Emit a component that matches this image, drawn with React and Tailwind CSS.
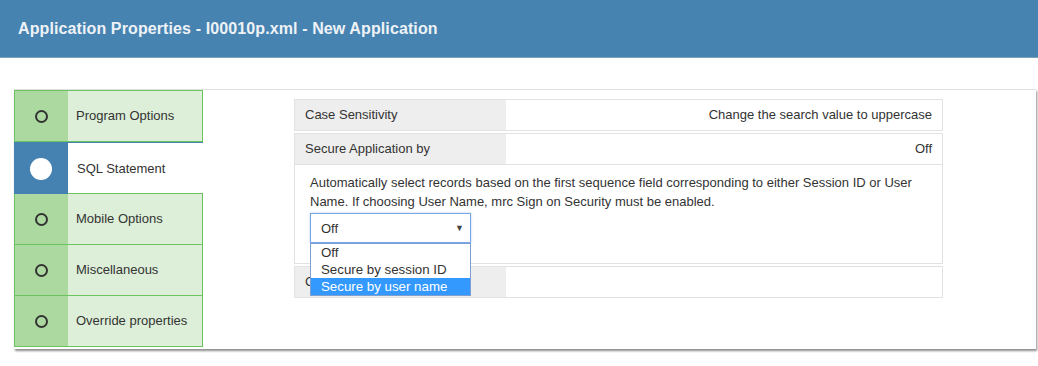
import React from "react";

const navItems = [
  { label: "Program Options" },
  { label: "SQL Statement", active: true },
  { label: "Mobile Options" },
  { label: "Miscellaneous" },
  { label: "Override properties" },
];

const options = ["Off", "Secure by session ID", "Secure by user name"];

function NavItem({ label, active }) {
  if (active) {
    return (
      <div className="flex h-[52px] border-t border-[#4682b1]">
        <div className="flex w-[54px] items-center justify-center bg-[#4682b1]">
          <span className="block h-[22px] w-[22px] rounded-full bg-white" />
        </div>
        <div className="flex flex-1 items-center pl-[9px] text-[13px] text-[#333]">{label}</div>
      </div>
    );
  }
  return (
    <div className="flex h-[52px] border border-[#6cc460] -mt-px first:mt-0">
      <div className="flex w-[53px] items-center justify-center bg-[#acd9a0]">
        <span className="block h-[13px] w-[13px] rounded-full border-2 border-[#333]" />
      </div>
      <div className="flex flex-1 items-center bg-[#ddefd8] pl-[8px] text-[13px] text-[#333]">{label}</div>
    </div>
  );
}

function Row({ label, value }) {
  return (
    <div className="flex h-[32px] border border-[#e2e2e2] text-[13px] text-[#333]">
      <div className="flex w-[211px] items-center bg-[#eeeeee] px-[10px]">{label}</div>
      <div className="flex flex-1 items-center justify-end bg-white px-[10px]">{value}</div>
    </div>
  );
}

export default function App() {
  return (
    <div className="min-h-[366px] bg-white" style={{ fontFamily: '"Liberation Sans", Arial, sans-serif' }}>
      <div className="flex h-[58px] items-center border-b border-[#7c9fb8] bg-[#4683b1] px-[18px]">
        <h1 className="text-[16px] font-bold tracking-[0.11px] text-[#eef2f6]">
          Application Properties - I00010p.xml - New Application
        </h1>
      </div>

      <div className="mx-[14px] mt-[31px] mr-[2px] flex h-[260px] border-t border-[#e0e0e0] bg-white shadow-[1px_2px_2px_rgba(0,0,0,0.45)]">
        <div className="w-[189px]">
          {navItems.map((item, i) => (
            <NavItem key={i} {...item} />
          ))}
        </div>

        <div className="ml-[91px] mt-[9px] w-[649px]">
          <Row label="Case Sensitivity" value="Change the search value to uppercase" />
          <div className="mt-[2px]">
            <Row label="Secure Application by" value="Off" />
            <div className="relative border-x border-b border-[#e2e2e2] px-[15px] pt-[8px] pb-[20px] text-[13px] leading-[19px] text-[#333]">
              <p>
                Automatically select records based on the first sequence field corresponding to either Session ID or User
                Name. If choosing User Name, mrc Sign on Security must be enabled.
              </p>
              <div className="mt-[2px] flex h-[30px] w-[161px] items-center justify-between border border-[#78a6e6] pl-[10px] pr-[6px] shadow-[0_0_2px_rgba(102,153,230,0.5)]">
                <span>Off</span>
                <span className="text-[9px] text-[#444]">▼</span>
              </div>
              <ul className="absolute left-[15px] top-[78px] z-10 w-[161px] border border-[#7e9fcf] bg-white text-[13.3px] leading-[17px]">
                {options.map((o, i) => (
                  <li
                    key={o}
                    className={i === 2 ? "bg-[#3399ff] pl-[10px] text-white" : "pl-[10px] text-[#333]"}
                  >
                    {o}
                  </li>
                ))}
              </ul>
            </div>
          </div>
          <div className="mt-[2px]">
            <Row label="Capture Options" value="" />
          </div>
        </div>
      </div>
    </div>
  );
}
